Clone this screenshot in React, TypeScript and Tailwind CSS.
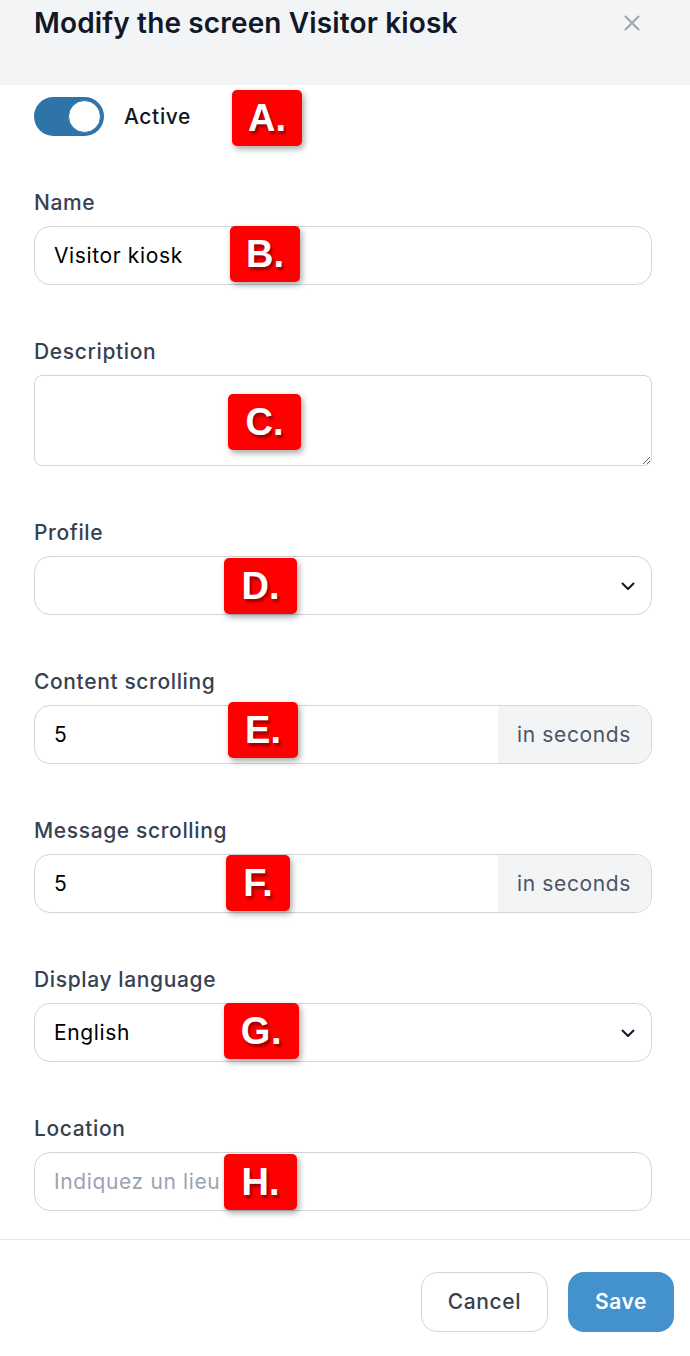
import React from 'react';

const Badge: React.FC<{ label: string; className: string }> = ({ label, className }) => (
  <div
    className={`absolute h-[56px] flex items-center justify-center rounded-[5px] bg-[#ff0000] text-white font-bold text-[38px] leading-none shadow-[2px_3px_6px_rgba(0,0,0,0.35)] [text-shadow:2px_3px_3px_rgba(110,0,0,0.7)] ${className}`}
    style={{ fontFamily: '"Liberation Sans", Arial, sans-serif' }}
  >
    {label}
  </div>
);

const Label: React.FC<{ children: React.ReactNode }> = ({ children }) => (
  <label className="block text-[21px] tracking-[0.03em] leading-[28px] font-medium text-[#374151]">{children}</label>
);

const Chevron = () => (
  <svg width="16" height="16" viewBox="0 0 16 16" fill="none" className="absolute right-[15px] top-1/2 -translate-y-1/2">
    <path d="M2.5 5.5 8 11l5.5-5.5" stroke="#111827" strokeWidth="2" strokeLinecap="round" strokeLinejoin="round" />
  </svg>
);

const App: React.FC = () => {
  return (
    <div className="w-[690px] min-h-[1356px] bg-white text-[#111827]" style={{ fontFamily: 'Inter, "Noto Sans", sans-serif' }}>
      {/* Header */}
      <div className="h-[85px] bg-[#f3f4f6] pl-[34px] pr-[50px] pt-[4px] flex items-start justify-between">
        <h1 className="text-[28px] tracking-[0.005em] leading-[38px] font-semibold text-[#111827]">Modify the screen Visitor kiosk</h1>
        <svg width="16" height="16" viewBox="0 0 16 16" className="mt-[11px]" fill="none">
          <path d="M1.5 1.5l13 13M14.5 1.5l-13 13" stroke="#9ca3af" strokeWidth="2" strokeLinecap="round" />
        </svg>
      </div>

      <div className="pr-[38px] pl-[34px] pt-[12px]">
        {/* Active toggle */}
        <div className="relative flex items-center gap-[20px]">
          <div className="w-[70px] h-[39px] rounded-full bg-[#2f74a9] flex items-center justify-end pr-[3px]">
            <div className="w-[33px] h-[33px] rounded-full bg-white border border-[#2f74a9]" />
          </div>
          <span className="text-[21px] tracking-[0.03em] leading-[28px] font-medium text-[#111827]">Active</span>
          <Badge label="A." className="left-[198px] top-[-7px] w-[70px]" />
        </div>

        {/* Name */}
        <div className="mt-[53px]">
          <Label>Name</Label>
          <div className="relative mt-[9px]">
            <input
              readOnly
              value="Visitor kiosk"
              className="w-full h-[59px] rounded-[16px] border border-[#d1d5db] px-[19px] text-[21px] tracking-[0.03em] text-black outline-none"
            />
            <Badge label="B." className="left-[196px] top-0 w-[70px]" />
          </div>
        </div>

        {/* Description */}
        <div className="mt-[53px]">
          <Label>Description</Label>
          <div className="relative mt-[9px]">
            <textarea readOnly className="block w-full h-[91px] rounded-[8px] border border-[#d1d5db] px-[19px] py-[12px] text-[21px] outline-none" />
            <Badge label="C." className="left-[194px] top-[19px] w-[73px]" />
          </div>
        </div>

        {/* Profile */}
        <div className="mt-[53px]">
          <Label>Profile</Label>
          <div className="relative mt-[9px] h-[59px] rounded-[16px] border border-[#d1d5db]">
            <Chevron />
            <Badge label="D." className="left-[189px] top-[1px] w-[73px]" />
          </div>
        </div>

        {/* Content scrolling */}
        <div className="mt-[53px]">
          <Label>Content scrolling</Label>
          <div className="relative mt-[9px] flex h-[59px] rounded-[16px] border border-[#d1d5db] overflow-hidden">
            <div className="flex-1 flex items-center px-[19px] text-[21px] text-black">5</div>
            <div className="w-[153px] bg-[#f3f4f6] flex items-center pl-[19px] text-[21px] tracking-[0.03em] text-[#4b5563]">in seconds</div>
          </div>
          <div className="relative">
            <Badge label="E." className="left-[194px] top-[-62px] w-[70px]" />
          </div>
        </div>

        {/* Message scrolling */}
        <div className="mt-[53px]">
          <Label>Message scrolling</Label>
          <div className="relative mt-[9px] flex h-[59px] rounded-[16px] border border-[#d1d5db] overflow-hidden">
            <div className="flex-1 flex items-center px-[19px] text-[21px] text-black">5</div>
            <div className="w-[153px] bg-[#f3f4f6] flex items-center pl-[19px] text-[21px] tracking-[0.03em] text-[#4b5563]">in seconds</div>
          </div>
          <div className="relative">
            <Badge label="F." className="left-[192px] top-[-58px] w-[64px]" />
          </div>
        </div>

        {/* Display language */}
        <div className="mt-[53px]">
          <Label>Display language</Label>
          <div className="relative mt-[9px] h-[59px] rounded-[16px] border border-[#d1d5db] flex items-center px-[19px] text-[21px] tracking-[0.03em] text-black">
            English
            <Chevron />
            <Badge label="G." className="left-[189px] top-[-1px] w-[75px]" />
          </div>
        </div>

        {/* Location */}
        <div className="mt-[53px]">
          <Label>Location</Label>
          <div className="relative mt-[9px]">
            <input
              readOnly
              placeholder="Indiquez un lieu"
              className="w-full h-[59px] rounded-[16px] border border-[#d1d5db] px-[19px] text-[21px] tracking-[0.03em] placeholder:text-[#9ca3af] outline-none"
            />
            <Badge label="H." className="left-[190px] top-[2px] w-[73px]" />
          </div>
        </div>
      </div>

      {/* Footer */}
      <div className="mt-[28px] border-t border-[#e5e7eb] pt-[32px] pr-[16px] flex justify-end gap-[20px]">
        <button className="w-[127px] h-[60px] rounded-[16px] border border-[#d1d5db] bg-white text-[21px] tracking-[0.03em] font-medium text-[#374151]">
          Cancel
        </button>
        <button className="w-[106px] h-[60px] rounded-[16px] bg-[#4392cd] text-[21px] tracking-[0.03em] font-semibold text-white">
          Save
        </button>
      </div>
    </div>
  );
};

export default App;
